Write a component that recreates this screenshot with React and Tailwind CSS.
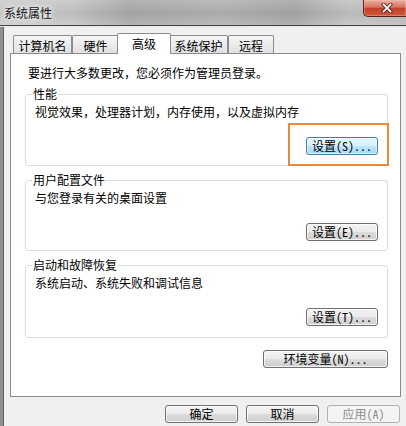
import React from "react";

function Btn({ children, w = "w-[72px]", variant = "normal" }) {
  const base =
    "h-[18px] rounded-[3px] border flex items-center justify-center text-[12px] leading-none whitespace-nowrap";
  const styles = {
    normal:
      "border-[#707070] text-black bg-[linear-gradient(to_bottom,#f3f3f3,#ebebeb_48%,#dcdcdc_52%,#cfcfcf)] shadow-[inset_0_0_0_1px_rgba(255,255,255,0.75)]",
    focused:
      "border-[#3c7fb1] text-black bg-[linear-gradient(to_bottom,#eaf6fd,#d9f0fc_48%,#bee6fd_52%,#a7d9f5)] shadow-[inset_0_0_0_1px_rgba(255,255,255,0.6)]",
    disabled: "border-[#adb2b5] text-[#8c8c8c] bg-[#f4f4f4]",
  };
  return <div className={`${base} ${w} ${styles[variant]}`}>{children}</div>;
}

function Group({ title, text, label, h, focused }) {
  return (
    <div
      className={`relative mt-[14px] w-[363px] ${h} rounded-[3px] border border-[#d5dfe5] pl-[9px] pt-[10px]`}
    >
      <span className="absolute left-[6px] top-[-8px] bg-white px-[1px] leading-[14px]">
        {title}
      </span>
      <div className="leading-[14px]">{text}</div>
      <div className="mt-[18px] flex justify-end pr-[9px]">
        <Btn variant={focused ? "focused" : "normal"}>{label}</Btn>
      </div>
      {focused && (
        <div className="pointer-events-none absolute left-[262px] top-[28px] h-[43px] w-[101px] border-2 border-[#ec8a3c]" />
      )}
    </div>
  );
}

function Tab({ children, selected, w, extra = "" }) {
  if (selected) {
    return (
      <div
        className={`relative z-10 h-[21px] ${w} ${extra} rounded-t-[2px] border border-b-0 border-[#898c95] bg-white pt-[3px] text-center leading-[14px]`}
      >
        {children}
      </div>
    );
  }
  return (
    <div
      className={`mb-px h-[18px] ${w} ${extra} rounded-t-[2px] border border-b-0 border-[#898c95] bg-[linear-gradient(to_bottom,#f6f6f6,#ececec_50%,#e0e0e0)] pt-[3px] text-center leading-[14px]`}
    >
      {children}
    </div>
  );
}

export default function App() {
  return (
    <div className="h-[426px] w-[406px] overflow-hidden bg-[#f0f0f0] text-[12px] text-black [font-family:'Noto_Sans_Mono_CJK_SC','Noto_Sans_CJK_SC',sans-serif]">
      {/* title bar */}
      <div className="flex h-[26px] justify-between border-b border-[#444444] bg-[linear-gradient(to_bottom,rgba(255,255,255,0.12),rgba(0,0,0,0.04)_55%,rgba(255,255,255,0.12)),linear-gradient(to_right,#cdcdcd,#c4c4c4_18%,#a9a9a9_32%,#b2b2b2_55%,#a6a6a6_72%,#c2c2c2_86%,#bcbcbc)]">
        <div className="pl-[4px] pt-[6px] leading-[14px] text-[#111111] [text-shadow:0_0_5px_#ffffff,0_0_8px_#ffffff]">
          系统属性
        </div>
        <div className="flex h-[17px] w-[43px] items-center justify-center rounded-bl-[5px] border-b border-l border-[#5a241b] bg-[linear-gradient(to_bottom,#eab0a2,#d8735f_45%,#c23f2a_52%,#cf5a3c)] pl-[4px] shadow-[inset_0_0_0_1px_rgba(255,200,190,0.35)]">
          <svg width="12" height="10" viewBox="0 0 12 10">
            <path
              d="M2.5 1.5 L9.5 8.5 M9.5 1.5 L2.5 8.5"
              stroke="#4a1a12"
              strokeWidth="3.4"
              strokeLinecap="square"
            />
            <path
              d="M2.5 1.5 L9.5 8.5 M9.5 1.5 L2.5 8.5"
              stroke="#ffffff"
              strokeWidth="1.8"
              strokeLinecap="square"
            />
          </svg>
        </div>
      </div>

      {/* body */}
      <div className="flex h-[400px] border-t border-[#e6e6e6]">
        <div className="w-[4px] border-r border-[#5f5f5f] bg-[#909090]" />
        <div className="flex-1 pl-[6px] pt-[6px]">
          {/* tabs */}
          <div className="relative z-10 flex h-[21px] items-end pl-[3px]">
            <Tab w="w-[59px]">计算机名</Tab>
            <Tab w="w-[47px]">硬件</Tab>
            <Tab selected w="w-[54px]" extra="-mx-[2px]">
              高级
            </Tab>
            <Tab w="w-[59px]">系统保护</Tab>
            <Tab w="w-[46px]">远程</Tab>
          </div>

          {/* panel */}
          <div className="relative -mt-px h-[344px] w-[391px] border border-[#898c95] bg-white pl-[14px] pr-[12px]">
            <div className="mt-[12px] pl-[3px] leading-[14px]">
              要进行大多数更改，您必须作为管理员登录。
            </div>
            <Group
              title="性能"
              text="视觉效果，处理器计划，内存使用，以及虚拟内存"
              label="设置(S)..."
              h="h-[72px]"
              focused
            />
            <Group
              title="用户配置文件"
              text="与您登录有关的桌面设置"
              label="设置(E)..."
              h="h-[71px]"
            />
            <Group
              title="启动和故障恢复"
              text="系统启动、系统失败和调试信息"
              label="设置(T)..."
              h="h-[73px]"
            />
            <div className="mt-[12px] flex justify-end">
              <Btn w="w-[125px]">环境变量(N)...</Btn>
            </div>
          </div>

          {/* bottom buttons */}
          <div className="mt-[8px] flex justify-end gap-[8px] pr-[6px]">
            <Btn w="w-[73px]">确定</Btn>
            <Btn w="w-[73px]">取消</Btn>
            <Btn w="w-[73px]" variant="disabled">
              应用(A)
            </Btn>
          </div>
        </div>
      </div>
    </div>
  );
}
